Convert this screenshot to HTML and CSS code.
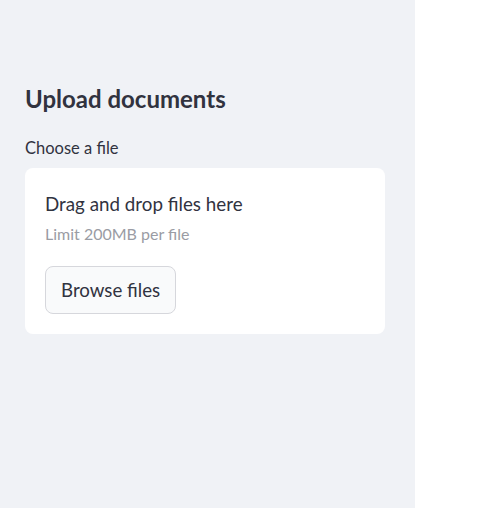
FILE: index.html
```html
<!DOCTYPE html>
<html>
<head>
<meta charset="utf-8">
<link rel="stylesheet" href="styles.css">
</head>
<body>
<aside class="sidebar">
  <h2 class="title">Upload documents</h2>
  <label class="label">Choose a file</label>
  <section class="dropzone">
    <div class="instructions">
      <span class="main">Drag and drop files here</span>
      <span class="limit">Limit 200MB per file</span>
    </div>
    <button class="browse">Browse files</button>
  </section>
</aside>
</body>
</html>
```
FILE: styles.css
```css
html, body {
  margin: 0;
  height: 100%;
  background: #ffffff;
}
body {
  font-family: "Lato", "Noto Sans", sans-serif;
  color: #31333f;
}
.sidebar {
  width: 415px;
  height: 100%;
  box-sizing: border-box;
  background: #f0f2f6;
  padding: 84px 30px 0 25px;
  display: flex;
  flex-direction: column;
}
.title {
  margin: 0;
  font-size: 24px;
  font-weight: 700;
  line-height: 30px;
}
.label {
  margin-top: 24px;
  font-size: 16.5px;
  line-height: 20px;
  height: 30px;
}
.dropzone {
  background: #ffffff;
  border-radius: 8px;
  padding: 24px 20px 20px;
  display: flex;
  flex-direction: column;
  align-items: flex-start;
}
.instructions {
  display: flex;
  flex-direction: column;
}
.main {
  font-size: 18.8px;
  line-height: 24px;
}
.limit {
  margin-top: 8px;
  font-size: 16px;
  line-height: 20px;
  color: #9a9ca4;
}
.browse {
  margin-top: 22px;
  height: 48px;
  padding: 0 15px;
  font-family: inherit;
  font-size: 18.7px;
  color: #31333f;
  background: #f9fafb;
  border: 1px solid #d6d7dc;
  border-radius: 8px;
}
```
